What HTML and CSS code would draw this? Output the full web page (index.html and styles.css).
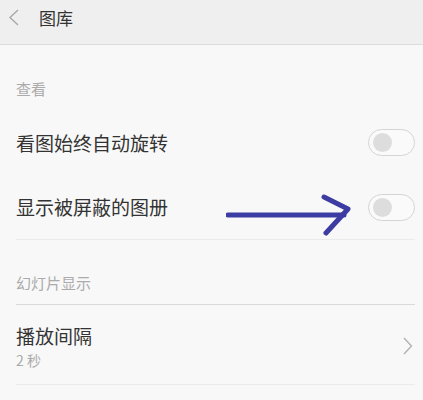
FILE: index.html
```html
<!DOCTYPE html>
<html lang="zh">
<head>
<meta charset="utf-8">
<link rel="stylesheet" href="styles.css">
</head>
<body>
<div class="page">
  <header class="bar">
    <svg class="back" width="12" height="18" viewBox="0 0 12 18"><polyline points="10,1 2,8.5 10,16" fill="none" stroke="#a8a8a8" stroke-width="1.4"/></svg>
    <span class="title">图库</span>
  </header>
  <div class="list">
    <div class="label">查看</div>
    <div class="row">
      <span class="text">看图始终自动旋转</span>
      <span class="toggle"><span class="knob"></span></span>
    </div>
    <div class="row line-light">
      <span class="text">显示被屏蔽的图册</span>
      <span class="toggle"><span class="knob"></span></span>
    </div>
    <div class="label line-dark">幻灯片显示</div>
    <div class="row tall line-light">
      <div class="stack">
        <span class="text">播放间隔</span>
        <span class="sub">2 秒</span>
      </div>
      <svg class="chev" width="10" height="18" viewBox="0 0 10 18"><polyline points="1,1 8.5,9 1,17" fill="none" stroke="#b0b0b0" stroke-width="1.3"/></svg>
    </div>
  </div>
  <svg class="arrow" width="130" height="48" viewBox="0 0 130 48"><path d="M2 27 L118 27" stroke="#3c3ca2" stroke-width="5" stroke-linecap="round" fill="none"/><path d="M98 9 L122 21 L100 45" stroke="#3c3ca2" stroke-width="5" stroke-linecap="round" stroke-linejoin="round" fill="none"/></svg>
</div>
</body>
</html>
```
FILE: styles.css
```css
html, body {
  margin: 0;
  padding: 0;
  background: #f8f8f8;
}
.page {
  position: relative;
  width: 423px;
  height: 400px;
  overflow: hidden;
  font-family: "Noto Sans CJK SC", "Noto Sans", sans-serif;
  background: #f8f8f8;
}
.bar {
  height: 45px;
  box-sizing: border-box;
  background: #efefef;
  border-bottom: 1px solid #dcdcdc;
  display: flex;
  align-items: flex-start;
  padding-top: 8px;
}
.back {
  margin-left: 8px;
  margin-top: 1px;
}
.title {
  margin-left: 19px;
  font-size: 17px;
  line-height: 19px;
  color: #333;
}
.list {
  margin: 0 8px 0 16px;
}
.label {
  height: 65px;
  box-sizing: border-box;
  display: flex;
  align-items: flex-end;
  padding-bottom: 13px;
  font-size: 15px;
  line-height: 16px;
  color: #ababab;
}
.row {
  height: 65px;
  box-sizing: border-box;
  display: flex;
  align-items: center;
  justify-content: space-between;
}
.line-light {
  border-bottom: 1px solid #ebebeb;
}
.line-dark {
  border-bottom: 1px solid #d9d9d9;
}
.text {
  font-size: 19px;
  line-height: 22px;
  color: #333;
}
.toggle {
  width: 47px;
  height: 27px;
  box-sizing: border-box;
  border: 1px solid #d4d4d4;
  border-radius: 14px;
  display: flex;
  align-items: center;
  padding-left: 4px;
  background: #fafafa;
}
.knob {
  width: 19px;
  height: 19px;
  border-radius: 50%;
  background: #dddddd;
}
.tall {
  height: 80px;
  align-items: flex-start;
  padding-top: 20px;
}
.stack {
  display: flex;
  flex-direction: column;
  gap: 4px;
}
.sub {
  font-size: 14px;
  line-height: 18px;
  color: #aaa;
}
.chev {
  margin-top: 12px;
  margin-right: 2px;
}
.arrow {
  position: absolute;
  left: 226px;
  top: 188px;
}
```
